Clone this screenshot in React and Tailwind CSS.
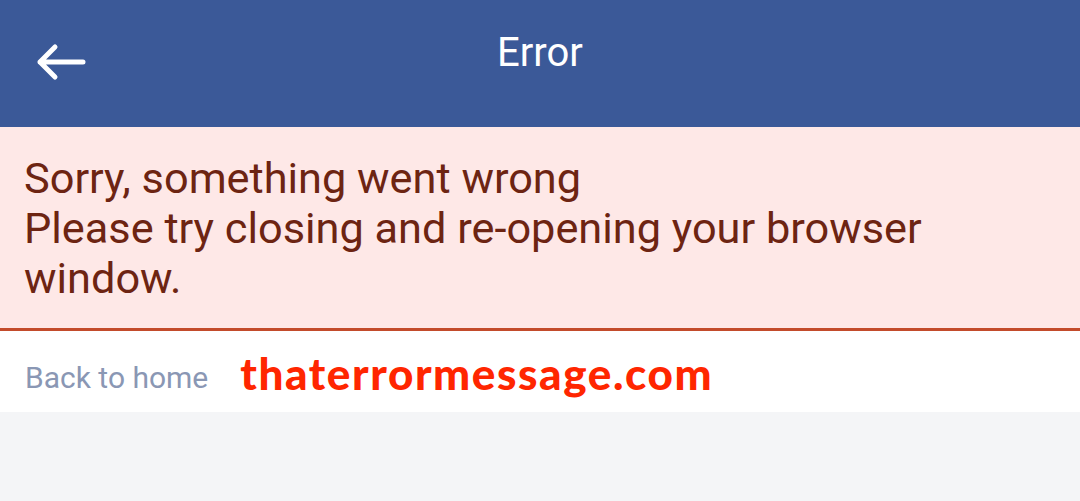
export default function App() {
  return (
    <div className="w-[1080px] h-[501px] bg-[#f4f5f7] overflow-hidden" style={{ fontFamily: 'Roboto, "Liberation Sans", sans-serif' }}>
      <div className="h-[127px] bg-[#3b5998] flex items-center relative">
        <svg className="absolute left-[34px] top-[42px]" width="52" height="40" viewBox="0 0 52 40" fill="none">
          <path d="M49 20H6M21 5L6 20L21 35" stroke="white" strokeWidth="5" strokeLinecap="round" strokeLinejoin="round" />
        </svg>
        <div className="w-full text-center text-white text-[40px] leading-none pb-[22px]">Error</div>
      </div>
      <div className="bg-[#fee8e7] border-b-[3px] border-[#c34b2b] pl-[24px] pr-[16px] pt-[27px] pb-[24px] text-[#6d2412] text-[43.3px] leading-[50px]">
        <div>Sorry, something went wrong</div>
        <div>Please try closing and re-opening your browser window.</div>
      </div>
      <div className="bg-white h-[81px] flex items-center px-[25px] gap-[32px]">
        <span className="text-[#8a97b4] text-[30px] mt-[12px]">Back to home</span>
        <span className="text-[#ff2600] text-[44px] font-black tracking-[1.6px] pt-[2px]" style={{ fontFamily: 'Lato, "Noto Sans", sans-serif' }}>thaterrormessage.com</span>
      </div>
    </div>
  );
}
